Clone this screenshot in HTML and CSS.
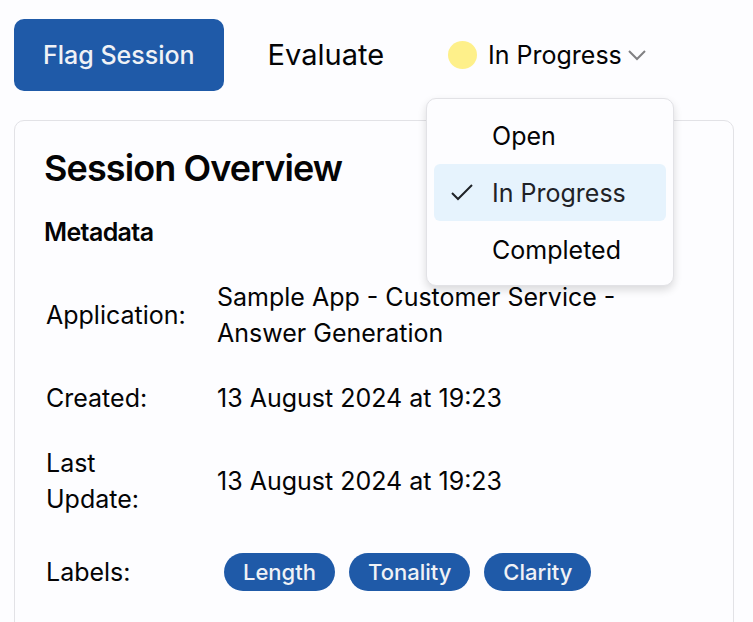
FILE: index.html
```html
<!DOCTYPE html>
<html lang="en">
<head>
<meta charset="utf-8">
<title>Session Overview</title>
<link rel="stylesheet" href="styles.css">
</head>
<body>
<main class="page">
  <header class="toolbar">
    <button class="btn btn-primary" type="button">Flag Session</button>
    <button class="btn btn-plain" type="button">Evaluate</button>
    <div class="status">
      <button class="status-trigger" type="button" aria-haspopup="listbox" aria-expanded="true">
        <span class="dot"></span>
        <span>In Progress</span>
        <svg class="chevron" viewBox="0 0 20 12" aria-hidden="true"><path d="M2 2l8 8 8-8"/></svg>
      </button>
      <div class="menu" role="listbox" aria-label="Status">
        <button class="option" type="button" role="option" aria-selected="false">Open</button>
        <button class="option option-active" type="button" role="option" aria-selected="true">
          <svg class="check" viewBox="0 0 24 20" aria-hidden="true"><path d="M2 10l6 6L22 2"/></svg>In Progress</button>
        <button class="option" type="button" role="option" aria-selected="false">Completed</button>
      </div>
    </div>
  </header>
  <section class="card">
    <h1>Session Overview</h1>
    <h2>Metadata</h2>
    <table class="meta">
      <tbody>
        <tr><th scope="row">Application:</th><td>Sample App - Customer Service - Answer Generation</td></tr>
        <tr><th scope="row">Created:</th><td>13 August 2024 at 19:23</td></tr>
        <tr><th scope="row">Last Update:</th><td>13 August 2024 at 19:23</td></tr>
        <tr><th scope="row">Labels:</th><td><div class="tags"><span class="tag">Length</span><span class="tag">Tonality</span><span class="tag">Clarity</span></div></td></tr>
      </tbody>
    </table>
  </section>
</main>
</body>
</html>
```
FILE: styles.css
```css
* { box-sizing: border-box; }
body {
  margin: 0;
  background: #fdfdff;
  color: #040405;
  font-family: Inter, "Liberation Sans", sans-serif;
  font-size: 25px;
  line-height: 36px;
}
button { border: 0; background: none; color: inherit; font: inherit; padding: 0; }
.page { padding: 19px 19px 0 14px; }
.toolbar { display: flex; align-items: center; margin-bottom: 29px; }
.btn { height: 72px; border-radius: 10px; }
.btn-primary { padding: 0 29px; background: #1f5aa8; color: #f0f2f6; font-weight: 500; }
.btn-plain { padding: 0 44px; font-size: 29px; }
.status { position: relative; margin-left: 20px; }
.status-trigger { display: flex; align-items: center; }
.dot { width: 29px; height: 28px; margin-right: 11px; border-radius: 50%; background: #fef08a; }
.chevron { width: 20px; height: 12px; margin-left: 5px; fill: none; stroke: #808083; stroke-width: 2; }
.menu {
  position: absolute;
  top: 61px;
  left: -22px;
  width: 248px;
  padding: 8px 7px 7px;
  border: 1px solid #e2e2e6;
  border-radius: 10px;
  background: #fdfdff;
  box-shadow: 0 4px 8px rgba(0, 0, 0, 0.14);
}
.option { position: relative; display: block; width: 100%; height: 57px; padding-left: 58px; border-radius: 6px; text-align: left; }
.option-active { background: #e6f3fd; color: #1f2227; }
.check { position: absolute; left: 16px; top: 19px; width: 24px; height: 20px; fill: none; stroke: #1f2227; stroke-width: 2; }
.card { padding: 29px; border: 1px solid #e2e2e6; border-radius: 10px; }
h1, h2 { font-weight: 600; line-height: 36px; letter-spacing: -0.025em; }
h1 { margin: 0; font-size: 36px; }
h2 { margin: 28px 0 14px; font-size: 25px; }
.meta { width: 100%; border-collapse: collapse; }
.meta th { width: 173px; padding: 15px 28px 14px 2px; font-weight: 400; text-align: left; }
.meta td { padding: 15px 0 14px; }
.tags { display: flex; gap: 14px; padding: 7px; }
.tag { padding: 0 19px; border-radius: 19px; background: #1f5aa8; color: #f0f2f6; font-size: 22px; line-height: 38px; font-weight: 500; }
```
